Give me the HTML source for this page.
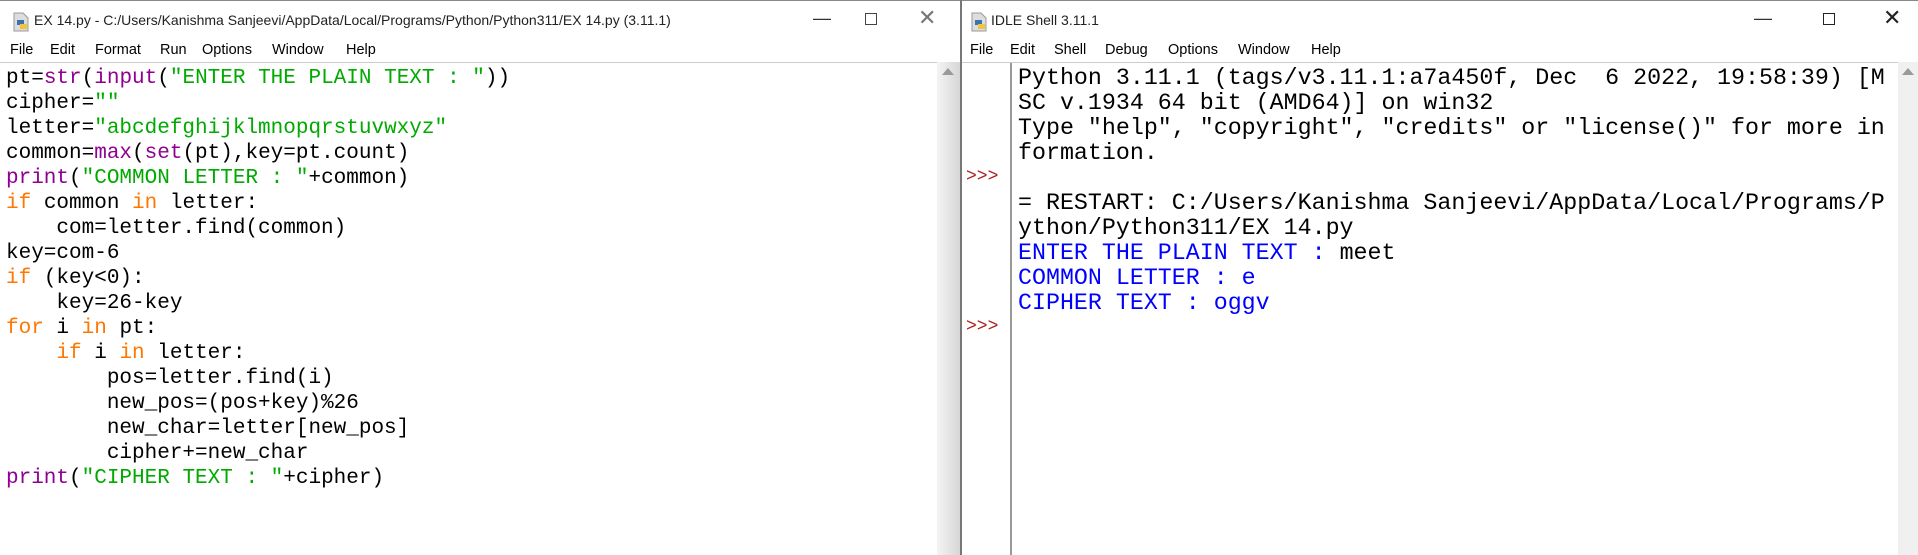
<!DOCTYPE html>
<html><head><meta charset="utf-8"><style>
*{margin:0;padding:0;box-sizing:border-box}
body{width:1918px;height:555px;background:#fff;position:relative;overflow:hidden;font-family:"Liberation Sans",sans-serif}
.abs{position:absolute}
.title{font-size:14px;color:#222;top:12px;white-space:nowrap}
.menu{font-size:14.5px;color:#000;top:42px;white-space:nowrap}
.code{font-family:"Liberation Mono",monospace;white-space:pre;position:absolute}
.l{font-size:21px;line-height:25px;left:6px;top:66px;color:#000}
.r{font-size:23.3px;line-height:25px;left:1018px;top:66px;color:#000}
.k{color:#ff7700}.b{color:#900090}.s{color:#00aa00}.o{color:#0000ff}
.p{color:#aa2222;font-family:"Liberation Mono",monospace;font-size:18px;position:absolute;left:966px;line-height:25px}
.ctl{color:#333;font-size:18px;position:absolute;top:8px}
</style></head><body>
<div class="abs" style="left:0;top:0;width:1918px;height:1px;background:#888"></div>
<!-- left window -->
<svg class="abs" style="left:12px;top:12px" width="18" height="20"><path d="M2 1h9l5 5v13H2z" fill="#ddd" stroke="#999"/><rect x="5" y="8" width="7" height="5" fill="#3a73b0"/><rect x="8" y="12" width="7" height="5" fill="#f2c53d"/></svg>
<div class="abs title" style="left:34px">EX 14.py - C:/Users/Kanishma Sanjeevi/AppData/Local/Programs/Python/Python311/EX 14.py (3.11.1)</div>
<div class="ctl" style="left:813px">—</div>
<div class="abs" style="left:865px;top:13px;width:12px;height:12px;border:1px solid #444"></div>
<div class="ctl" style="left:918px;top:5px;font-size:22px;color:#777">✕</div>
<div class="abs menu" style="left:10px">File</div>
<div class="abs menu" style="left:50px">Edit</div>
<div class="abs menu" style="left:95px">Format</div>
<div class="abs menu" style="left:160px">Run</div>
<div class="abs menu" style="left:202px">Options</div>
<div class="abs menu" style="left:272px">Window</div>
<div class="abs menu" style="left:346px">Help</div>
<div class="abs" style="left:0;top:62px;width:937px;height:1px;background:#ccc"></div>
<div class="abs" style="left:937px;top:62px;width:23px;height:493px;background:linear-gradient(90deg,#f4f4f4,#d6d6d6)"></div>
<div class="abs" style="left:942px;top:68px;width:0;height:0;border-left:6px solid transparent;border-right:6px solid transparent;border-bottom:7px solid #999"></div>
<div class="abs" style="left:960px;top:0;width:2px;height:555px;background:#777"></div>
<div class="code l">pt=<span class="b">str</span>(<span class="b">input</span>(<span class="s">"ENTER THE PLAIN TEXT : "</span>))
cipher=<span class="s">""</span>
letter=<span class="s">"abcdefghijklmnopqrstuvwxyz"</span>
common=<span class="b">max</span>(<span class="b">set</span>(pt),key=pt.count)
<span class="b">print</span>(<span class="s">"COMMON LETTER : "</span>+common)
<span class="k">if</span> common <span class="k">in</span> letter:
    com=letter.find(common)
key=com-6
<span class="k">if</span> (key&lt;0):
    key=26-key
<span class="k">for</span> i <span class="k">in</span> pt:
    <span class="k">if</span> i <span class="k">in</span> letter:
        pos=letter.find(i)
        new_pos=(pos+key)%26
        new_char=letter[new_pos]
        cipher+=new_char
<span class="b">print</span>(<span class="s">"CIPHER TEXT : "</span>+cipher)</div>
<!-- right window -->
<svg class="abs" style="left:970px;top:12px" width="18" height="20"><path d="M2 1h9l5 5v13H2z" fill="#ddd" stroke="#999"/><rect x="5" y="8" width="7" height="5" fill="#3a73b0"/><rect x="8" y="12" width="7" height="5" fill="#f2c53d"/></svg>
<div class="abs title" style="left:991px">IDLE Shell 3.11.1</div>
<div class="ctl" style="left:1754px">—</div>
<div class="abs" style="left:1823px;top:13px;width:12px;height:12px;border:1px solid #222"></div>
<div class="ctl" style="left:1883px;top:5px;font-size:22px;color:#222">✕</div>
<div class="abs menu" style="left:970px">File</div>
<div class="abs menu" style="left:1010px">Edit</div>
<div class="abs menu" style="left:1054px">Shell</div>
<div class="abs menu" style="left:1105px">Debug</div>
<div class="abs menu" style="left:1168px">Options</div>
<div class="abs menu" style="left:1238px">Window</div>
<div class="abs menu" style="left:1311px">Help</div>
<div class="abs" style="left:962px;top:62px;width:936px;height:1px;background:#ccc"></div>
<div class="abs" style="left:1010px;top:63px;width:2px;height:492px;background:#999"></div>
<div class="abs" style="left:1898px;top:62px;width:20px;height:493px;background:#f0f0f0"></div>
<div class="abs" style="left:1902px;top:68px;width:0;height:0;border-left:6px solid transparent;border-right:6px solid transparent;border-bottom:7px solid #999"></div>
<div class="p" style="top:165px">&gt;&gt;&gt;</div>
<div class="p" style="top:315px">&gt;&gt;&gt;</div>
<div class="code r">Python 3.11.1 (tags/v3.11.1:a7a450f, Dec  6 2022, 19:58:39) [M
SC v.1934 64 bit (AMD64)] on win32
Type "help", "copyright", "credits" or "license()" for more in
formation.

= RESTART: C:/Users/Kanishma Sanjeevi/AppData/Local/Programs/P
ython/Python311/EX 14.py
<span class="o">ENTER THE PLAIN TEXT : </span>meet
<span class="o">COMMON LETTER : e</span>
<span class="o">CIPHER TEXT : oggv</span></div>
</body></html>
